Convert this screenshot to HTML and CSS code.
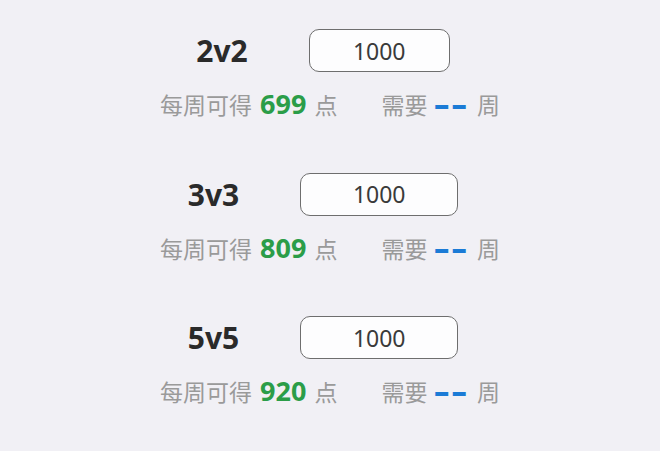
FILE: index.html
```html
<!DOCTYPE html>
<html lang="zh">
<head>
    <meta charset="UTF-8">
    <meta name="viewport" content="width=device-width, initial-scale=1.0">
    <title>每周点数</title>
    <link rel="stylesheet" href="styles.css">
</head>
<body>
    <div class="list">
        <div class="item">
            <div class="top">
                <div class="mode">2v2</div>
                <input class="score narrow" type="text" value="1000">
            </div>
            <div class="info">
                <span>每周可得 <b class="points">699</b> 点</span>
                <span>需要 <b class="weeks">--</b> 周</span>
            </div>
        </div>
        <div class="item">
            <div class="top">
                <div class="mode">3v3</div>
                <input class="score" type="text" value="1000">
            </div>
            <div class="info">
                <span>每周可得 <b class="points">809</b> 点</span>
                <span>需要 <b class="weeks">--</b> 周</span>
            </div>
        </div>
        <div class="item">
            <div class="top">
                <div class="mode">5v5</div>
                <input class="score" type="text" value="1000">
            </div>
            <div class="info">
                <span>每周可得 <b class="points">920</b> 点</span>
                <span>需要 <b class="weeks">--</b> 周</span>
            </div>
        </div>
    </div>
</body>
</html>
```

FILE: styles.css
```css
body {
    margin: 0;
    background-color: #f1f0f5;
    font-family: "Noto Sans", "Noto Sans CJK SC", sans-serif;
    color: #9a9a9a;
}
.list {
    padding-top: 29px;
    display: flex;
    flex-direction: column;
    gap: 52.5px;
}
.top {
    display: flex;
    justify-content: center;
    align-items: center;
    gap: 61px;
    padding-right: 14px;
    height: 43px;
}
.mode {
    font-size: 30px;
    font-weight: bold;
    color: #2a2a2a;
}
.score {
    box-sizing: border-box;
    width: 158px;
    height: 43px;
    border: 1px solid #6e6e6e;
    border-radius: 10px;
    background-color: #fdfdfe;
    font-family: "Noto Sans", "Noto Sans CJK SC", sans-serif;
    font-size: 23px;
    color: #3a3a3a;
    text-align: center;
    padding: 0;
    outline: none;
}
.score.narrow {
    width: 141px;
}
.info {
    margin-top: 17px;
    display: flex;
    justify-content: center;
    gap: 44px;
    font-size: 23px;
    line-height: 30px;
    word-spacing: 2px;
}
.points {
    color: #2b9d48;
    font-size: 27px;
}
/* dashes are drawn wider than the font's hyphen, so the box gets side margins */
.weeks {
    display: inline-block;
    margin: 0 7px;
    color: #1b7bd6;
    font-size: 26px;
    font-weight: 900;
    letter-spacing: 1.5px;
    white-space: nowrap;
    transform: scaleX(1.8);
}
```
